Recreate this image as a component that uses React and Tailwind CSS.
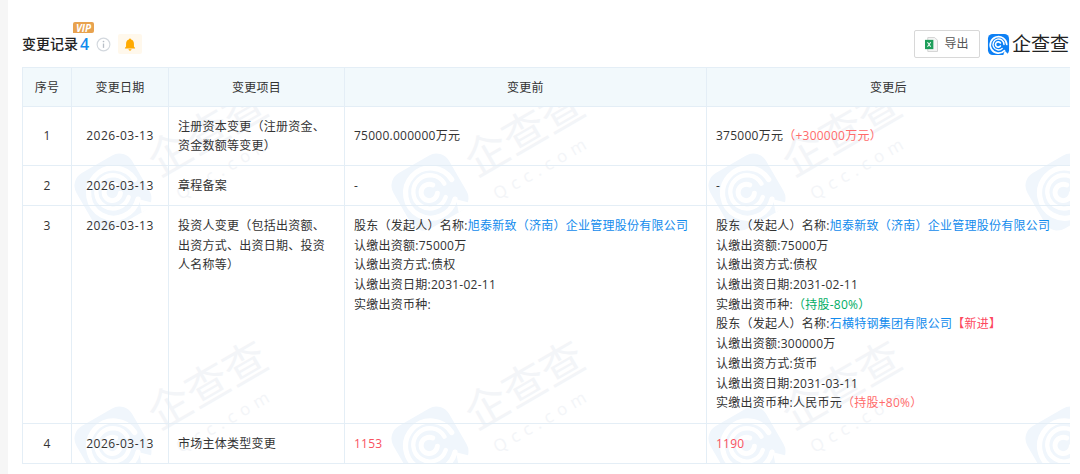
import React from 'react';

const FONT = { fontFamily: '"Open Sans", "Noto Sans CJK SC", sans-serif' };

// logo centres, relative to the table wrapper
const TILE_X = [91, 408, 725, 1042];
const TILE_Y = [125, 378];

function QccMark({ className, fill, ring }) {
  return (
    <svg viewBox="0 0 24 24" className={className} fill="none">
      <rect x="1" y="1" width="22" height="22" rx="5" fill={fill} />
      <path d="M18.2 18.4A8.6 8.6 0 1 1 20.6 12" stroke={ring} strokeWidth="1.8" strokeLinecap="round" />
      <path d="M15.800 16.200A5.700 5.700 0 1 1 17.700 12" stroke={ring} strokeWidth="1.5" strokeLinecap="round" />
      <path d="M14 10.400A2.800 2.800 0 1 0 14 13.600" stroke={ring} strokeWidth="1.7" strokeLinecap="round" />
      <path d="M18.500 18.600L23 23H17Z" fill={ring} />
    </svg>
  );
}

function Watermark() {
  return (
    <div className="absolute inset-0 pointer-events-none">
      {TILE_Y.map((y) =>
        TILE_X.map((x) => (
          <div key={`${x}-${y}`} className="absolute w-0 h-0" style={{ left: x, top: y }}>
            <QccMark className="absolute left-[-35px] top-[-35px] w-[70px] h-[70px] rotate-[-30deg]" fill="#f0f6fc" ring="#ffffff" />
            <span className="absolute left-[94px] top-[-61px] -translate-x-1/2 -translate-y-1/2 rotate-[-30deg] whitespace-nowrap text-[43px] leading-none text-[#f3f5f8]">企查查</span>
            <span className="absolute left-[112px] top-[-25px] -translate-x-1/2 -translate-y-1/2 rotate-[-30deg] whitespace-nowrap text-[17px] leading-none tracking-[6px] text-[#f3f5f8]">Qcc.com</span>
          </div>
        ))
      )}
    </div>
  );
}

function Link({ children }) {
  return <span className="text-[#128bed]">{children}</span>;
}

function Th({ children, className = '' }) {
  return <th className={`border border-[#e4eef6] font-normal text-center px-[9px] pt-[1px] ${className}`}>{children}</th>;
}

function Td({ children, className = '' }) {
  return <td className={`border border-[#e4eef6] px-[9px] py-[9.5px] ${className}`}>{children}</td>;
}

function App() {
  return (
    <div className="flex w-[1080px] h-[474px] overflow-hidden bg-white text-[#333333]" style={FONT}>
      <div className="w-[8px] shrink-0 bg-[#f6f6f6]" />
      <div className="flex-1 pl-[14px] pr-[10px]">
        <div className="flex items-end h-[67px] pb-[11px]">
          <div className="relative flex items-center h-[24px]">
            <span className="text-[14px] leading-[24px] font-medium text-[#222222]">变更记录</span>
            <span className="ml-[2px] text-[16px] leading-[24px] font-semibold text-[#128bed]">4</span>
            <span className="absolute left-[51px] top-[-10px] flex items-center justify-center w-[21px] h-[11px] rounded-[2px] rounded-bl-none bg-[#e8a24f] text-[10px] leading-none font-bold italic text-white">VIP</span>
            <svg viewBox="0 0 16 16" className="ml-[7px] w-[15px] h-[15px]" fill="none">
              <circle cx="8" cy="8" r="6.8" stroke="#d3d8de" strokeWidth="1.2" />
              <circle cx="8" cy="4.8" r="0.9" fill="#b8bec6" />
              <path d="M8 7v4.6" stroke="#b8bec6" strokeWidth="1.4" />
            </svg>
            <span className="ml-[7px] flex items-center justify-center w-[24px] h-[20px] rounded-[2px] bg-[#fff8ec]">
              <svg viewBox="0 0 16 16" className="w-[14px] h-[15px]" fill="#ffaa00">
                <path d="M8 1.2c.7 0 1.1.4 1.2 1C11.400 2.800 12.500 4.600 12.500 7v3.200l1.300 1.800v.6H2.200V12l1.300-1.800V7c0-2.400 1.100-4.200 3.300-4.800.1-.6.500-1 1.200-1Z" />
                <path d="M6.200 13.400h3.600C9.600 14.400 8.900 15 8 15s-1.600-.6-1.800-1.600Z" />
              </svg>
            </span>
          </div>
          <div className="ml-auto flex items-center gap-[7px] mb-[-2px] mr-[1px]">
            <button className="flex items-center justify-center gap-[6px] w-[66px] h-[28px] rounded-[2px] border border-[#d8d8d8] bg-white text-[12px] text-[#555555]">
              <svg viewBox="0 0 14 16" className="w-[13px] h-[15px]" fill="none">
                <path d="M3 .5h7.500L13.500 3.500v12H3Z" fill="#f5f5f5" stroke="#d0d0d0" />
                <rect x="0" y="3" width="9" height="10" fill="#1e9e5a" />
                <path d="M2.700 5.500l3.400 5M6.100 5.500l-3.400 5" stroke="#ffffff" strokeWidth="1.100" />
              </svg>
              导出
            </button>
            <div className="flex items-center gap-[2px]">
              <QccMark className="w-[23px] h-[23px]" fill="#0d80f5" ring="#ffffff" />
              <span className="text-[19px] leading-none text-[#222222]">企查查</span>
            </div>
          </div>
        </div>

        <div className="relative w-[1048px] overflow-hidden text-[12px] tracking-[0.25px] leading-[19.7px]">
          <Watermark />
          <table className="relative table-fixed w-[1048px] border-collapse">
            <colgroup>
              <col className="w-[49px]" />
              <col className="w-[97px]" />
              <col className="w-[176px]" />
              <col className="w-[362px]" />
              <col className="w-[364px]" />
            </colgroup>
            <thead>
              <tr className="h-[39px] bg-[#f2f9fc]">
                <Th>序号</Th>
                <Th>变更日期</Th>
                <Th>变更项目</Th>
                <Th>变更前</Th>
                <Th>变更后</Th>
              </tr>
            </thead>
            <tbody>
              <tr className="h-[59px]">
                <Td className="text-center">1</Td>
                <Td className="text-center tracking-[0.5px]">2026-03-13</Td>
                <Td>注册资本变更（注册资金、资金数额等变更）</Td>
                <Td>75000.000000万元</Td>
                <Td>375000万元<span className="text-[#ff6b6b]">（+300000万元）</span></Td>
              </tr>
              <tr className="h-[40px]">
                <Td className="text-center">2</Td>
                <Td className="text-center tracking-[0.5px]">2026-03-13</Td>
                <Td>章程备案</Td>
                <Td>-</Td>
                <Td>-</Td>
              </tr>
              <tr className="h-[218px] align-top">
                <Td className="text-center">3</Td>
                <Td className="text-center tracking-[0.5px]">2026-03-13</Td>
                <Td>投资人变更（包括出资额、出资方式、出资日期、投资人名称等）</Td>
                <Td>
                  <div>股东（发起人）名称:<Link>旭泰新致（济南）企业管理股份有限公司</Link></div>
                  <div>认缴出资额:75000万</div>
                  <div>认缴出资方式:债权</div>
                  <div>认缴出资日期:2031-02-11</div>
                  <div>实缴出资币种:</div>
                </Td>
                <Td>
                  <div>股东（发起人）名称:<Link>旭泰新致（济南）企业管理股份有限公司</Link></div>
                  <div>认缴出资额:75000万</div>
                  <div>认缴出资方式:债权</div>
                  <div>认缴出资日期:2031-02-11</div>
                  <div>实缴出资币种:<span className="text-[#00ad65]">（持股-80%）</span></div>
                  <div>股东（发起人）名称:<Link>石横特钢集团有限公司</Link><span className="text-[#fd485e]">【新进】</span></div>
                  <div>认缴出资额:300000万</div>
                  <div>认缴出资方式:货币</div>
                  <div>认缴出资日期:2031-03-11</div>
                  <div>实缴出资币种:人民币元<span className="text-[#ff6b6b]">（持股+80%）</span></div>
                </Td>
              </tr>
              <tr className="h-[40px]">
                <Td className="text-center">4</Td>
                <Td className="text-center tracking-[0.5px]">2026-03-13</Td>
                <Td>市场主体类型变更</Td>
                <Td className="text-[#f9525f]">1153</Td>
                <Td className="text-[#f9525f]">1190</Td>
              </tr>
            </tbody>
          </table>
        </div>
      </div>
    </div>
  );
}

export default App;
